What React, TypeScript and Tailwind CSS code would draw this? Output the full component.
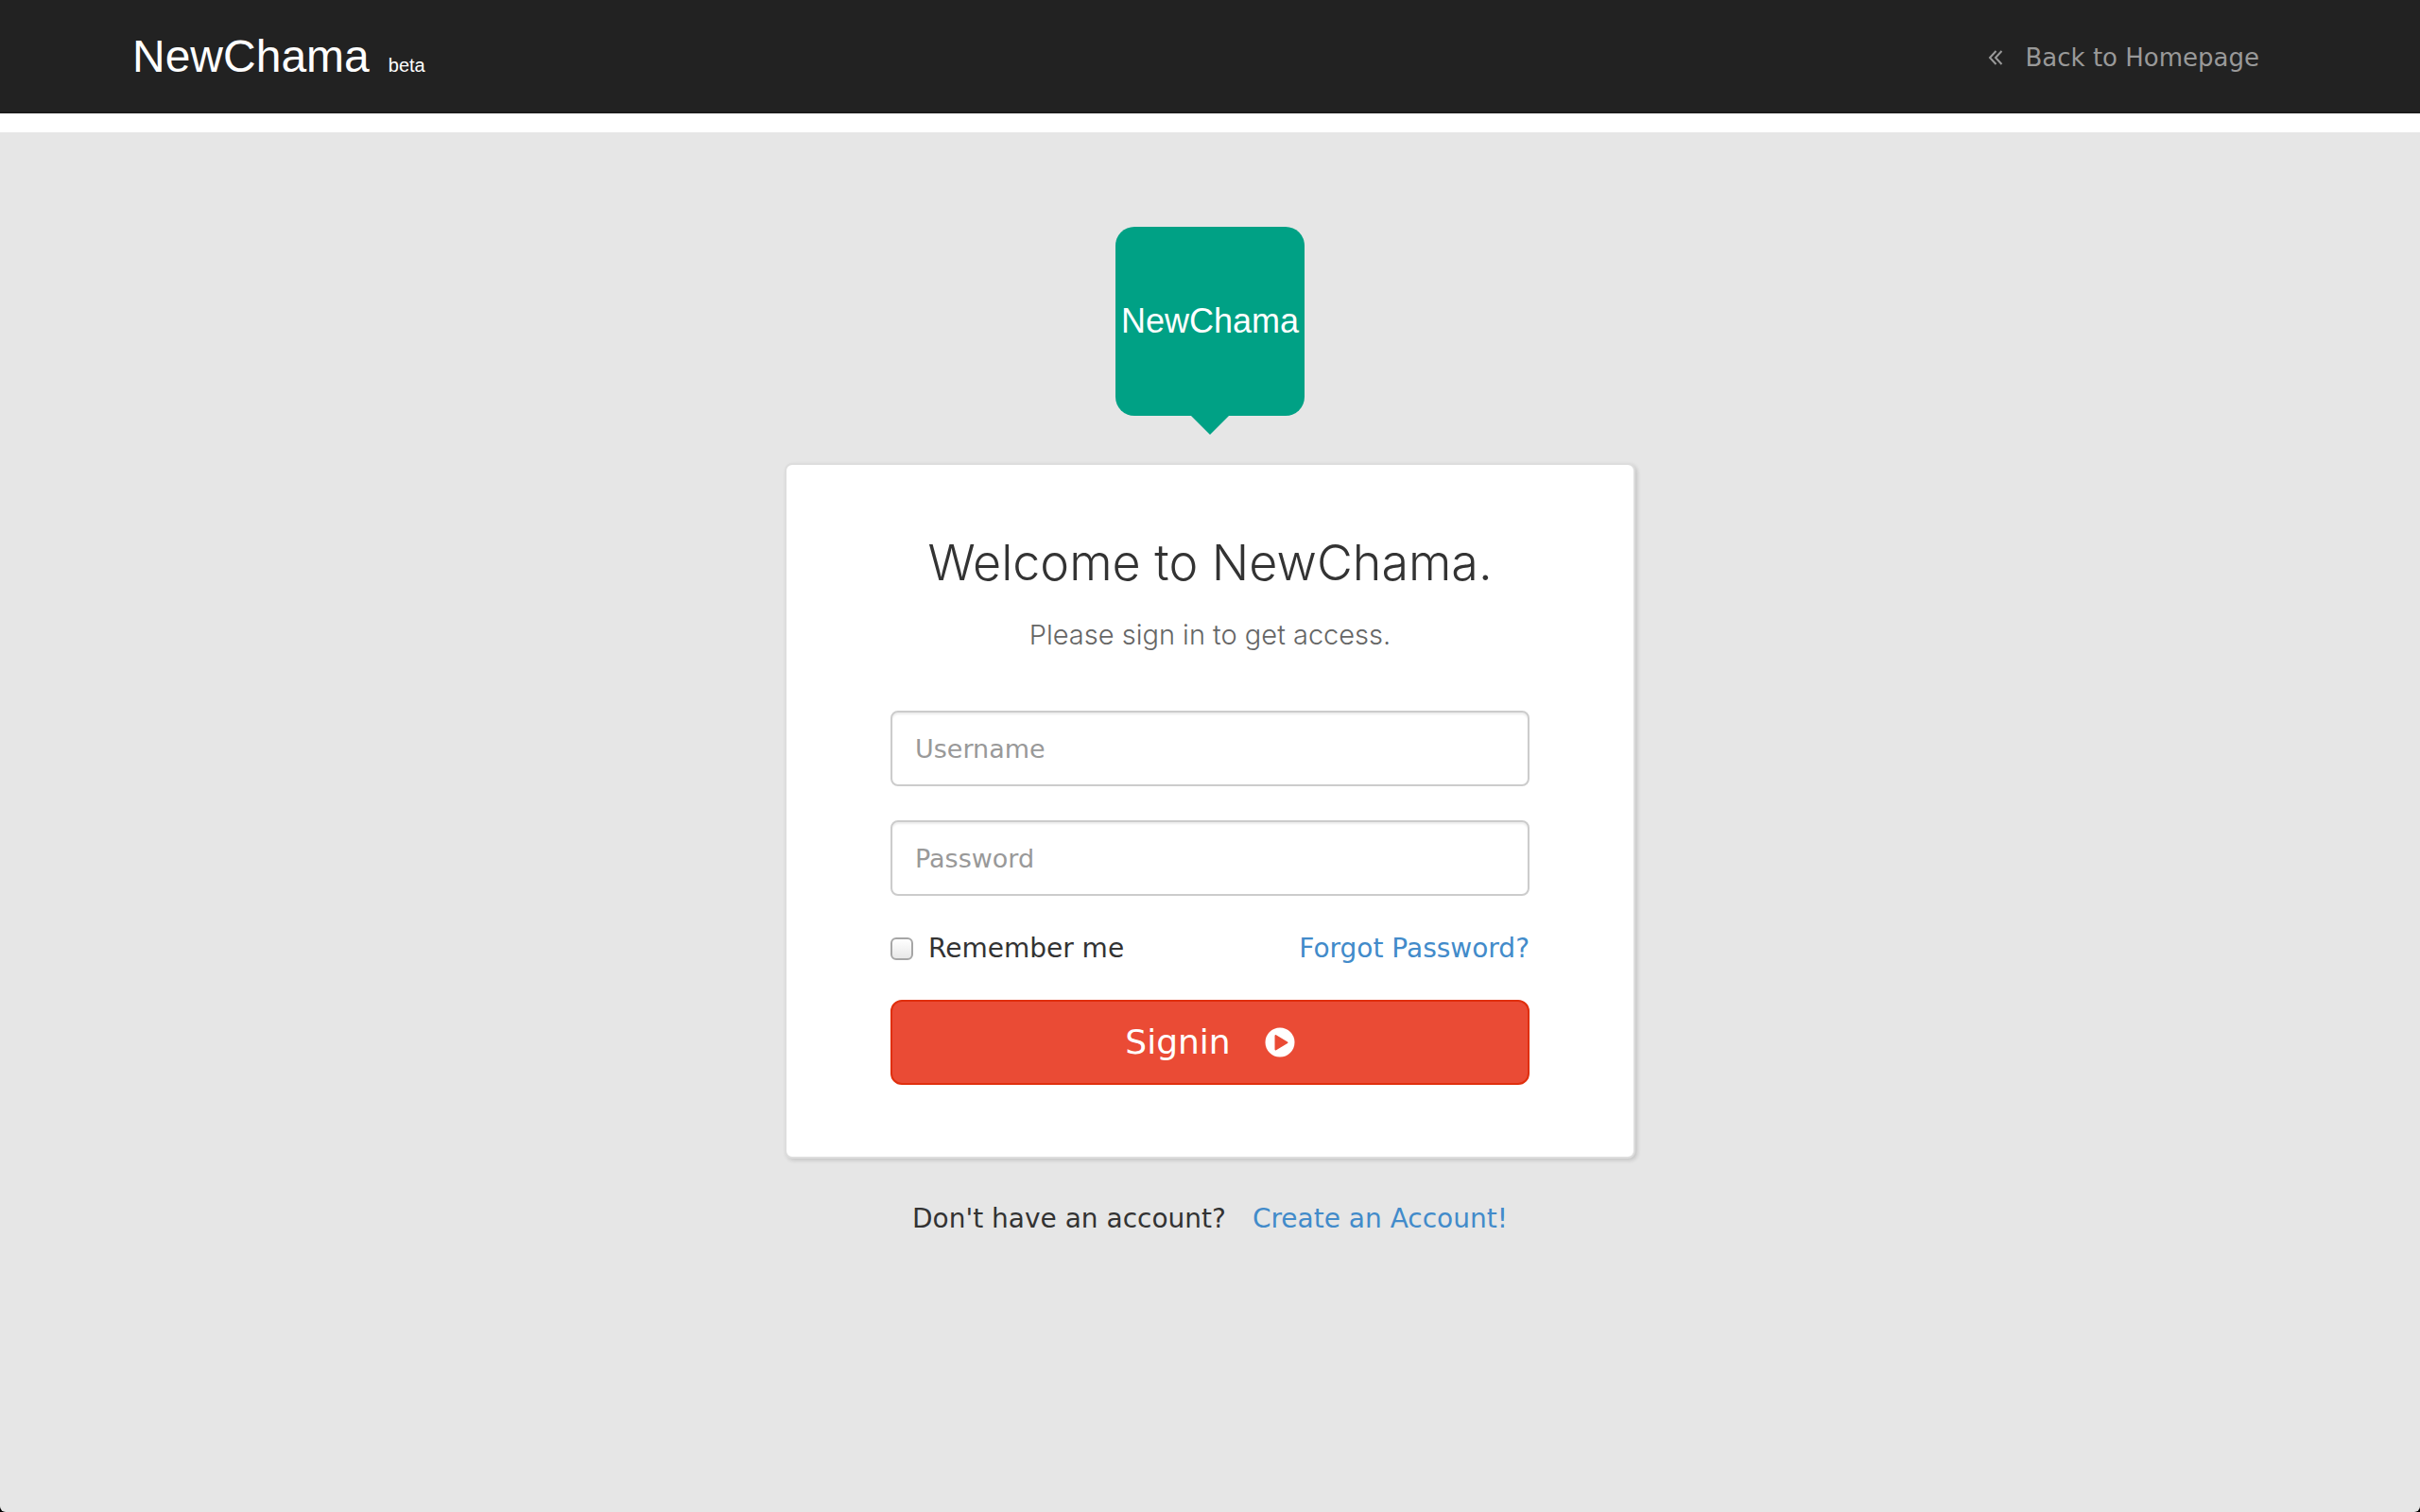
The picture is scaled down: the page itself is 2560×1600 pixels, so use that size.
import React from "react";

function AngleDoubleLeft() {
  return (
    <svg aria-hidden="true" viewBox="0 0 16 16" className="h-4 w-4" fill="none" stroke="currentColor" strokeWidth="2">
      <path d="M8.500 1 2 8l6.500 7M14.500 1 8 8l6.500 7" />
    </svg>
  );
}

function PlayCircle() {
  return (
    <svg aria-hidden="true" viewBox="0 0 32 32" className="h-8 w-8">
      <circle cx="16" cy="16" r="15.500" fill="currentColor" />
      <path d="M11.500 9v14.500l12-7.250z" fill="#ea4b35" stroke="#ea4b35" strokeWidth="2" strokeLinejoin="round" />
    </svg>
  );
}

const field =
  "block h-20 w-full rounded-lg border-2 border-[#cccccc] bg-white px-6 text-[27px] text-[#555555] shadow-[inset_0_2px_2px_rgba(0,0,0,0.075)] outline-none placeholder:text-[#999999]";

export default function App() {
  return (
    <div className="bg-black">
      <div className="flex min-h-screen flex-col overflow-hidden rounded-b-md bg-[#e6e6e6] font-['DejaVu_Sans',sans-serif] text-[28px] leading-10 text-[#333333]">
        <header className="border-b-2 border-[#1b1b1b] bg-[#222222]">
          <div className="mx-auto flex h-[118px] max-w-[2340px] items-center justify-between px-[30px] pt-1">
            <a href="#home" className="flex items-baseline gap-5 font-['Liberation_Sans',sans-serif] text-white">
              <span className="text-[48px]">NewChama</span>
              <span className="text-xl">beta</span>
            </a>
            <a href="#home" className="mr-[30px] flex items-center gap-6 text-[26px] text-[#999999]">
              <AngleDoubleLeft />
              Back to Homepage
            </a>
          </div>
        </header>
        <div className="h-5 bg-white" />
        <main className="flex flex-1 flex-col items-center pt-[100px]">
          <div className="flex flex-col items-center">
            <div className="flex h-[200px] w-[200px] items-center justify-center rounded-[20px] bg-[#00a185] font-['Liberation_Sans',sans-serif] text-4xl text-white">
              NewChama
            </div>
            <div className="h-0 w-0 border-x-20 border-t-20 border-x-transparent border-t-[#00a185]" />
          </div>
          <section className="mt-[30px] w-full max-w-[900px] rounded-lg border-2 border-[#dddddd] bg-white px-[110px] pt-[74px] pb-[76px] shadow-[2px_2px_4px_rgba(0,0,0,0.15)]">
            <h1 className="text-center font-['Inter',sans-serif] text-[52px] leading-[60px] font-light">
              Welcome to NewChama.
            </h1>
            <p className="mt-[26px] text-center font-['Inter',sans-serif] text-[29px] leading-10 font-light text-[#666666]">
              Please sign in to get access.
            </p>
            <form className="mt-[60px]" onSubmit={(e) => e.preventDefault()}>
              <input type="text" aria-label="Username" placeholder="Username" className={field} />
              <input type="password" aria-label="Password" placeholder="Password" className={`${field} mt-9`} />
              <div className="mt-9 flex items-center justify-between">
                <label className="flex items-center gap-4">
                  <input
                    type="checkbox"
                    className="h-6 w-6 appearance-none rounded-md border-2 border-[#a6a6a6] bg-linear-to-b from-white to-[#e8e8e8] checked:bg-[#428bca]"
                  />
                  Remember me
                </label>
                <a href="#forgot" className="text-[#428bca]">Forgot Password?</a>
              </div>
              <button
                type="submit"
                className="mt-[34px] flex h-[90px] w-full items-center justify-center gap-9 rounded-xl border-2 border-[#e02f0d] bg-[#ea4b35] text-4xl text-white"
              >
                Signin
                <PlayCircle />
              </button>
            </form>
          </section>
          <p className="mt-11 flex gap-7">
            Don't have an account?
            <a href="#signup" className="text-[#428bca]">Create an Account!</a>
          </p>
        </main>
      </div>
    </div>
  );
}
